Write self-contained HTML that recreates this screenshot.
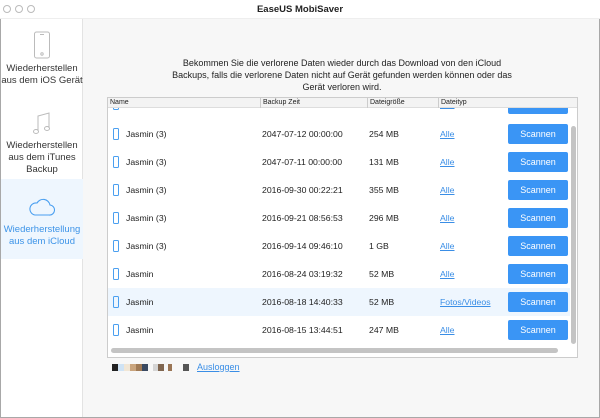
<!DOCTYPE html><html><head><style>
*{margin:0;padding:0;box-sizing:border-box}
body{width:600px;height:418px;overflow:hidden;font-family:"Liberation Sans",sans-serif;background:#f7f7f7;position:relative;font-size:9px;color:#222}
.win{position:absolute;left:0;top:0;width:600px;height:418px;border:1px solid #a8a8a8;border-top:1px solid #c8c8c8}
.title{position:absolute;left:0;top:0;width:600px;height:19px;background:#fff;text-align:center;font-size:9.5px;font-weight:bold;line-height:19px;border-bottom:1px solid #eee}
.dot{position:absolute;top:5px;width:8px;height:8px;border:1px solid #bbb;border-radius:50%}
.side{position:absolute;left:1px;top:19px;width:82px;height:398px;background:#fff;border-right:1px solid #e3e3e3}
.item{position:absolute;left:0;width:82px;text-align:center;font-size:9.5px;line-height:12px;color:#333}
.sel{background:#eef6fe;color:#3d94e8}
.msg{position:absolute;left:84px;top:57px;width:516px;text-align:center;font-size:9px;line-height:12px;color:#222}
.tbl{position:absolute;left:107px;top:97px;width:471px;height:261px;border:1px solid #ccc;background:#fff;overflow:hidden}
.hdr{position:absolute;left:0;top:0;width:469px;height:10px;background:#f3f3f3;border-bottom:1px solid #ddd;font-size:7px;line-height:10px}
.hdr span{position:absolute;top:0;border-left:1px solid #ccc;padding-left:2px}
.row{position:absolute;left:0;width:462px;height:28px;font-size:8.7px;line-height:28px}
.row span{position:absolute;top:0}
.ph{position:absolute;left:5px;top:8px;width:6px;height:12px;border:1px solid #4a9ff0;border-radius:1.5px}
.btn{position:absolute;left:400px;top:4px;width:60px;height:20px;background:#3a95f5;color:#fff;text-align:center;line-height:20px;font-size:9px;border-radius:2px}
a{color:#3a8ee6;text-decoration:underline}
</style></head><body>
<div class="win"></div>
<div class="title">EaseUS MobiSaver
<div class="dot" style="left:3px"></div><div class="dot" style="left:15px"></div><div class="dot" style="left:27px"></div></div>
<div class="side">
<div class="item" style="top:12px">
<svg width="18" height="28" viewBox="0 0 18 28" style="display:block;margin:0 auto 4px"><rect x="1.5" y="1" width="15" height="26" rx="2" fill="none" stroke="#bbb"/><circle cx="9" cy="23" r="1.2" fill="none" stroke="#bbb"/><line x1="7" y1="3.5" x2="11" y2="3.5" stroke="#bbb"/></svg>
Wiederherstellen<br>aus dem iOS Gerät</div>
<div class="item" style="top:93px">
<svg width="20" height="24" viewBox="0 0 20 24" style="display:block;margin:0 auto 4px"><path d="M6 19V4L17 1V16" fill="none" stroke="#bbb"/><ellipse cx="4" cy="19.5" rx="2.5" ry="2" fill="none" stroke="#bbb"/><ellipse cx="15" cy="16.5" rx="2.5" ry="2" fill="none" stroke="#bbb"/></svg>
Wiederherstellen<br>aus dem iTunes<br>Backup</div>
<div class="item sel" style="top:160px;height:80px;padding-top:19px">
<svg width="26" height="18" viewBox="0 0 26 18" style="display:block;margin:0 auto 8px"><path d="M6 17H20A5 5 0 0 0 21 7A7 7 0 0 0 8 5A6 6 0 0 0 6 17Z" fill="none" stroke="#4a9ff0" stroke-width="1.1"/></svg>
Wiederherstellung<br>aus dem iCloud</div>
</div>
<div class="msg">Bekommen Sie die verlorene Daten wieder durch das Download von den iCloud<br>Backups, falls die verlorene Daten nicht auf Gerät gefunden werden können oder das<br>Gerät verloren wird.</div>
<div class="tbl">
<div class="row" style="top:-8px"><div class="ph"></div><span style="left:332px"><a>Alle</a></span><div class="btn">Scannen</div></div>
<div class="row" style="top:22px"><div class="ph"></div><span style="left:18px">Jasmin (3)</span><span style="left:154px">2047-07-12 00:00:00</span><span style="left:261px">254 MB</span><span style="left:332px"><a>Alle</a></span><div class="btn">Scannen</div></div>
<div class="row" style="top:50px"><div class="ph"></div><span style="left:18px">Jasmin (3)</span><span style="left:154px">2047-07-11 00:00:00</span><span style="left:261px">131 MB</span><span style="left:332px"><a>Alle</a></span><div class="btn">Scannen</div></div>
<div class="row" style="top:78px"><div class="ph"></div><span style="left:18px">Jasmin (3)</span><span style="left:154px">2016-09-30 00:22:21</span><span style="left:261px">355 MB</span><span style="left:332px"><a>Alle</a></span><div class="btn">Scannen</div></div>
<div class="row" style="top:106px"><div class="ph"></div><span style="left:18px">Jasmin (3)</span><span style="left:154px">2016-09-21 08:56:53</span><span style="left:261px">296 MB</span><span style="left:332px"><a>Alle</a></span><div class="btn">Scannen</div></div>
<div class="row" style="top:134px"><div class="ph"></div><span style="left:18px">Jasmin (3)</span><span style="left:154px">2016-09-14 09:46:10</span><span style="left:261px">1 GB</span><span style="left:332px"><a>Alle</a></span><div class="btn">Scannen</div></div>
<div class="row" style="top:162px"><div class="ph"></div><span style="left:18px">Jasmin</span><span style="left:154px">2016-08-24 03:19:32</span><span style="left:261px">52 MB</span><span style="left:332px"><a>Alle</a></span><div class="btn">Scannen</div></div>
<div class="row" style="top:190px;background:#eef6fe"><div class="ph"></div><span style="left:18px">Jasmin</span><span style="left:154px">2016-08-18 14:40:33</span><span style="left:261px">52 MB</span><span style="left:332px"><a>Fotos/Videos</a></span><div class="btn">Scannen</div></div>
<div class="row" style="top:218px"><div class="ph"></div><span style="left:18px">Jasmin</span><span style="left:154px">2016-08-15 13:44:51</span><span style="left:261px">247 MB</span><span style="left:332px"><a>Alle</a></span><div class="btn">Scannen</div></div>
<div class="hdr"><span style="left:0;border:none">Name</span><span style="left:152px">Backup Zeit</span><span style="left:259px">Dateigröße</span><span style="left:330px">Dateityp</span></div>
<div style="position:absolute;left:463px;top:28px;width:5px;height:218px;background:#c4c4c4;border-radius:3px"></div>
<div style="position:absolute;left:3px;top:250px;width:447px;height:5px;background:#c4c4c4;border-radius:3px"></div>
</div>
<div style="position:absolute;left:112px;top:364px;width:60px;height:7px;background:linear-gradient(90deg,#222 0 6px,#cfe3f5 6px 12px,#f1e6d5 12px 18px,#c9a47d 18px 24px,#a07a55 24px 30px,#3a4a62 30px 36px,transparent 36px 41px,#d5d5d5 41px 46px,#806650 46px 52px,transparent 52px 56px,#9a7555 56px 60px)"></div>
<div style="position:absolute;left:183px;top:364px;width:6px;height:7px;background:#555"></div>
<a style="position:absolute;left:197px;top:362px;font-size:9px">Ausloggen</a>
</body></html>
